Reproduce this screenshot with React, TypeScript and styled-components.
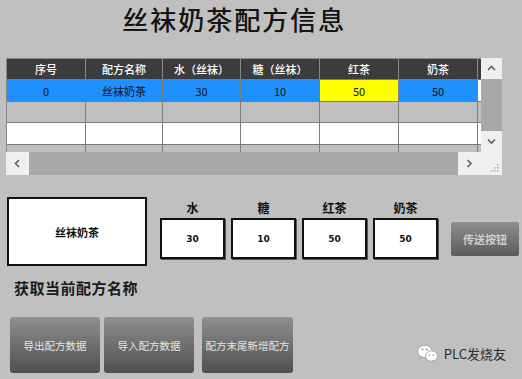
import React from "react";
import styled, { createGlobalStyle } from "styled-components";

const Global = createGlobalStyle`
  html, body { margin: 0; padding: 0; background: #c0c0c0; }
  body { width: 522px; height: 379px; overflow: hidden; font-family: "Noto Sans CJK SC", "Noto Sans", sans-serif; }
`;

const Page = styled.div`
  width: 522px;
  height: 379px;
  background: #c0c0c0;
  display: flex;
  flex-direction: column;
`;

const Header = styled.header`
  height: 58px;
  display: flex;
  align-items: flex-start;
  padding-left: 122px;
  box-sizing: border-box;
`;

const Title = styled.h1`
  margin: 0;
  font-family: "Noto Sans CJK SC", sans-serif;
  font-weight: 400;
  font-size: 26px;
  line-height: 38px;
  letter-spacing: 2px;
  color: #111;
  text-shadow: 0.4px 0.4px 0 #333;
`;

const GridFrame = styled.div`
  margin-left: 6px;
  width: 496px;
  height: 117px;
  display: grid;
  grid-template-columns: 475px 21px;
  grid-template-rows: 94px 23px;
`;

const TableArea = styled.div`
  overflow: hidden;
  background: #c0c0c0;
  border-left: 1px solid #888;
  border-top: 1px solid #888;
  box-sizing: border-box;
`;

const Row = styled.div<{ $bg: string; $h: number }>`
  display: grid;
  grid-template-columns: 79px 77px 78px 79px 79px 79px 1fr;
  height: ${(p) => p.$h}px;
  background: ${(p) => p.$bg};
  box-sizing: border-box;
  border-bottom: 1px solid #7c7c7c;
`;

const Cell = styled.div<{ $bg?: string; $head?: boolean }>`
  display: flex;
  align-items: center;
  justify-content: center;
  border-right: 1px solid ${(p) => (p.$head ? "#8a8a8a" : "#7c7c7c")};
  background: ${(p) => p.$bg || "transparent"};
  color: ${(p) => (p.$head ? "#ffffff" : "#101010")};
  font-size: 11px;
  font-weight: ${(p) => (p.$head ? 500 : 400)};
  font-family: "Noto Sans CJK SC", sans-serif;
`;

const Filler = styled.div<{ $bg: string }>`
  background: ${(p) => p.$bg};
`;

const VScroll = styled.div`
  display: grid;
  grid-template-rows: 21px 52px 21px;
  background: #efefef;
`;

const HScroll = styled.div`
  display: grid;
  grid-template-columns: 23px 1fr 23px;
  background: #efefef;
`;

const ScrollBtn = styled.div`
  display: flex;
  align-items: center;
  justify-content: center;
  background: #efefef;
`;

const Thumb = styled.div`
  background: #a8a8a8;
`;

const Corner = styled.div`
  background: #efefef;
  display: flex;
  align-items: flex-end;
  justify-content: flex-end;
  padding: 0 3px 3px 0;
  box-sizing: border-box;
`;

const Panel = styled.div`
  display: flex;
  align-items: flex-start;
  margin-top: 22px;
  padding-left: 7px;
`;

const NameBox = styled.div`
  width: 140px;
  height: 69px;
  box-sizing: border-box;
  border: 2px solid #111;
  background: #fff;
  display: flex;
  align-items: center;
  justify-content: center;
  font-size: 11px;
  font-weight: 700;
  color: #111;
`;

const Values = styled.div`
  display: flex;
  gap: 6px;
  margin-left: 13px;
`;

const ValueCol = styled.div`
  display: flex;
  flex-direction: column;
  width: 65px;
`;

const ValueLabel = styled.div`
  height: 21px;
  line-height: 21px;
  text-align: center;
  font-size: 12px;
  font-weight: 700;
  color: #111;
`;

const ValueBox = styled.div`
  height: 41px;
  box-sizing: border-box;
  border: 2px solid #111;
  box-shadow: 1px 1px 0 #555;
  background: #fff;
  display: flex;
  align-items: center;
  justify-content: center;
  font-family: "DejaVu Sans", sans-serif;
  font-size: 9px;
  font-weight: 700;
  color: #111;
`;

const SendButton = styled.div`
  margin: 25px 0 0 13px;
  width: 68px;
  height: 34px;
  border-radius: 2px;
  background: linear-gradient(#8e8e8e, #5c5c5c);
  display: flex;
  align-items: center;
  justify-content: center;
  color: #cfcfcf;
  font-size: 11px;
  font-weight: 700;
`;

const Caption = styled.div`
  margin: 11px 0 0 14px;
  height: 22px;
  line-height: 22px;
  font-size: 15px;
  font-weight: 700;
  color: #1a1a1a;
  letter-spacing: 0.5px;
`;

const BottomRow = styled.div`
  display: flex;
  align-items: flex-start;
  margin-top: 18px;
  padding-left: 10px;
`;

const ActionButton = styled.div<{ $w: number; $ml: number }>`
  width: ${(p) => p.$w}px;
  margin-left: ${(p) => p.$ml}px;
  height: 56px;
  border-radius: 3px;
  background: linear-gradient(#8f8f8f, #4f4f4f);
  display: flex;
  align-items: center;
  justify-content: center;
  color: #e4e4e4;
  font-size: 10.5px;
`;

const Watermark = styled.div`
  margin: 27px 16px 0 auto;
  display: flex;
  align-items: center;
  gap: 5px;
  color: #2a2a2a;
  font-size: 13px;
  font-family: "Noto Sans CJK SC", sans-serif;
`;

const Chevron = ({ dir }: { dir: "up" | "down" | "left" | "right" }) => {
  const pts: Record<string, string> = {
    up: "1,5 4.5,1.5 8,5",
    down: "1,1.5 4.5,5 8,1.5",
    left: "5,1 1.5,4.5 5,8",
    right: "1.5,1 5,4.5 1.5,8",
  };
  const vertical = dir === "up" || dir === "down";
  return (
    <svg width={vertical ? 9 : 7} height={vertical ? 7 : 9} viewBox={vertical ? "0 0 9 7" : "0 0 7 9"}>
      <polyline points={pts[dir]} fill="none" stroke="#606060" strokeWidth="1.6" />
    </svg>
  );
};

const Grip = () => (
  <svg width="8" height="8" viewBox="0 0 8 8">
    {[
      [6, 0], [6, 3], [3, 3], [6, 6], [3, 6], [0, 6],
    ].map(([x, y], i) => (
      <rect key={i} x={x} y={y} width="1.5" height="1.5" fill="#b0b0b0" />
    ))}
  </svg>
);

const WeChat = () => (
  <svg width="22" height="19" viewBox="0 0 22 19">
    <ellipse cx="8" cy="7.5" rx="7.2" ry="6.2" fill="#fff" stroke="#9a9a9a" strokeWidth="0.8" />
    <path d="M3.5 12.5 L2.8 15 L6 13.3 Z" fill="#fff" stroke="#9a9a9a" strokeWidth="0.8" />
    <ellipse cx="14.5" cy="12" rx="6" ry="5.2" fill="#fff" stroke="#9a9a9a" strokeWidth="0.8" />
    <path d="M17.5 16.3 L19 18.5 L15.5 17 Z" fill="#fff" stroke="#9a9a9a" strokeWidth="0.8" />
    <circle cx="5.5" cy="5.5" r="0.9" fill="#888" />
    <circle cx="10" cy="5.5" r="0.9" fill="#888" />
    <circle cx="12.5" cy="11" r="0.8" fill="#888" />
    <circle cx="16.5" cy="11" r="0.8" fill="#888" />
  </svg>
);

const headers = ["序号", "配方名称", "水（丝袜）", "糖（丝袜）", "红茶", "奶茶"];
const values = [
  { label: "水", value: "30" },
  { label: "糖", value: "10" },
  { label: "红茶", value: "50" },
  { label: "奶茶", value: "50" },
];

export default function App() {
  const row1 = ["0", "丝袜奶茶", "30", "10", "50", "50"];
  return (
    <Page>
      <Global />
      <Header>
        <Title>丝袜奶茶配方信息</Title>
      </Header>
      <GridFrame>
        <TableArea>
          <Row $bg="#3c3c3c" $h={21}>
            {headers.map((h) => (
              <Cell key={h} $head>
                {h}
              </Cell>
            ))}
            <Filler $bg="#3c3c3c" />
          </Row>
          <Row $bg="#1e90ff" $h={22}>
            {row1.map((v, i) => (
              <Cell key={i} $bg={i === 4 ? "#ffff00" : undefined}>
                {v}
              </Cell>
            ))}
            <Filler $bg="#ffffff" />
          </Row>
          <Row $bg="#c0c0c0" $h={21}>
            {headers.map((h) => (
              <Cell key={h} />
            ))}
            <Filler $bg="#c0c0c0" />
          </Row>
          <Row $bg="#ffffff" $h={22}>
            {headers.map((h) => (
              <Cell key={h} />
            ))}
            <Filler $bg="#ffffff" />
          </Row>
          <Row $bg="#c0c0c0" $h={21}>
            {headers.map((h) => (
              <Cell key={h} />
            ))}
            <Filler $bg="#c0c0c0" />
          </Row>
        </TableArea>
        <VScroll>
          <ScrollBtn>
            <Chevron dir="up" />
          </ScrollBtn>
          <Thumb />
          <ScrollBtn>
            <Chevron dir="down" />
          </ScrollBtn>
        </VScroll>
        <HScroll>
          <ScrollBtn>
            <Chevron dir="left" />
          </ScrollBtn>
          <Thumb />
          <ScrollBtn>
            <Chevron dir="right" />
          </ScrollBtn>
        </HScroll>
        <Corner>
          <Grip />
        </Corner>
      </GridFrame>
      <Panel>
        <NameBox>丝袜奶茶</NameBox>
        <Values>
          {values.map((v) => (
            <ValueCol key={v.label}>
              <ValueLabel>{v.label}</ValueLabel>
              <ValueBox>{v.value}</ValueBox>
            </ValueCol>
          ))}
        </Values>
        <SendButton>传送按钮</SendButton>
      </Panel>
      <Caption>获取当前配方名称</Caption>
      <BottomRow>
        <ActionButton $w={90} $ml={0}>导出配方数据</ActionButton>
        <ActionButton $w={90} $ml={4}>导入配方数据</ActionButton>
        <ActionButton $w={91} $ml={8}>配方末尾新增配方</ActionButton>
        <Watermark>
          <WeChat />
          <span>PLC发烧友</span>
        </Watermark>
      </BottomRow>
    </Page>
  );
}
